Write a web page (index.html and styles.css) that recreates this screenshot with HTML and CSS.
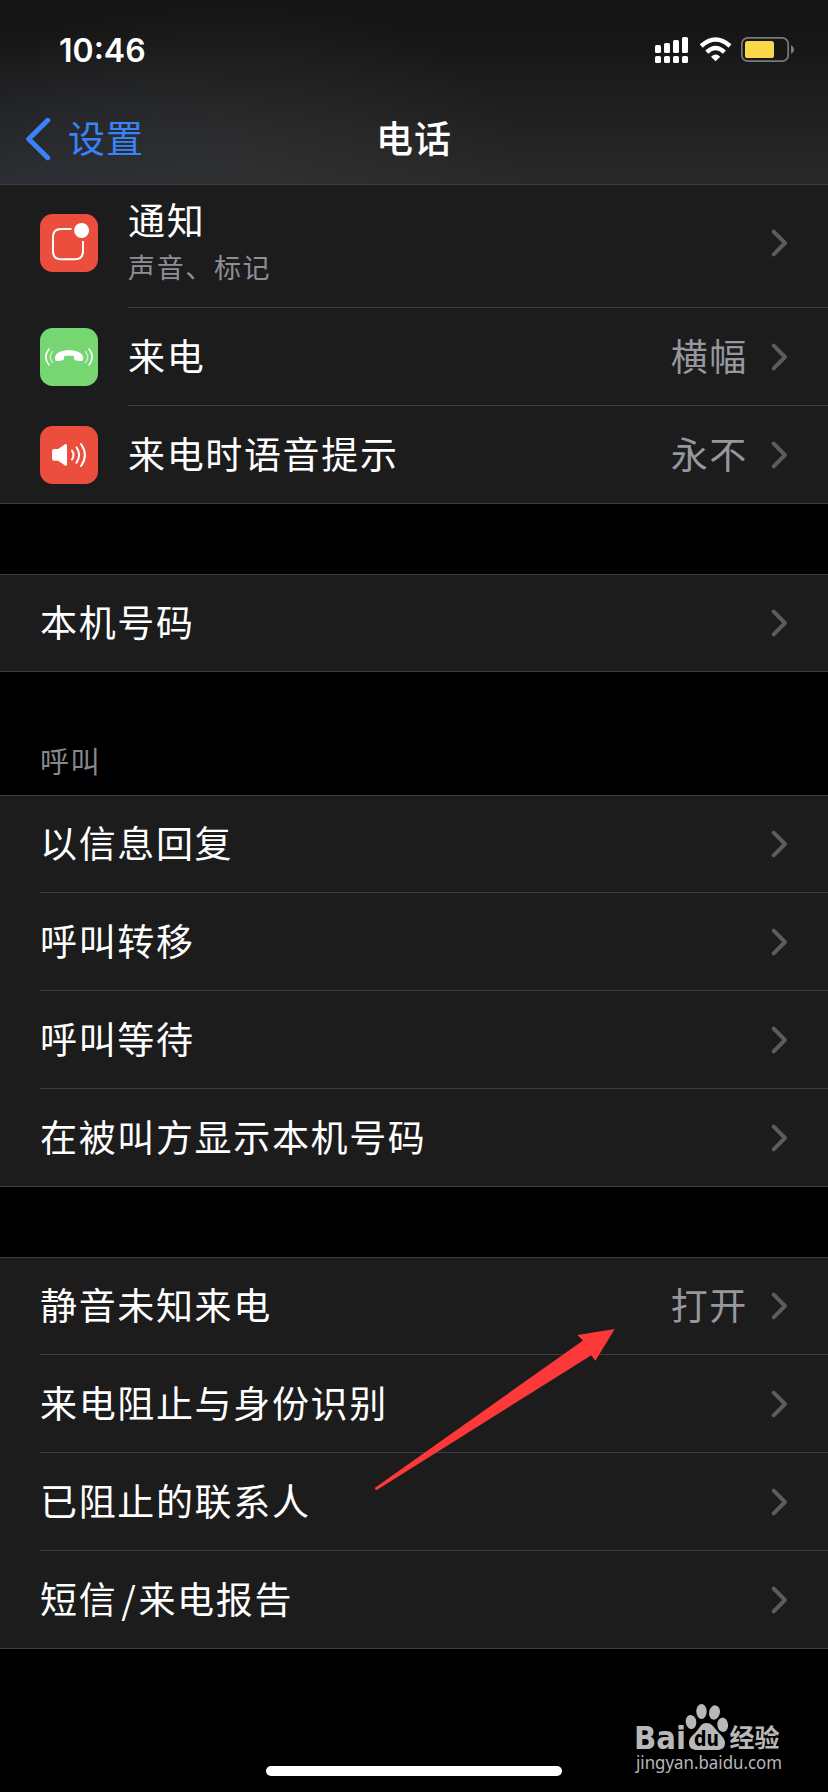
FILE: index.html
```html
<!DOCTYPE html>
<html lang="zh-CN">
<head>
<meta charset="utf-8">
<title>电话</title>
<link rel="stylesheet" href="styles.css">
</head>
<body>
<svg class="defs" width="0" height="0" aria-hidden="true">
  <symbol id="chevron" viewBox="0 0 18 30"><path d="M3.700 3.700 L15 15 L3.700 26.300" fill="none" stroke="#5c5c60" stroke-width="4" stroke-linecap="round" stroke-linejoin="round"/></symbol>
</svg>
<div class="screen">
  <header class="header">
    <div class="status">
      <span class="time">10:46</span>
      <svg class="indicators" width="140" height="28" viewBox="655 36 140 28">
        <g fill="#fff">
          <rect x="655" y="45" width="6" height="8" rx="1.6"/><rect x="664" y="43" width="6" height="10" rx="1.6"/><rect x="673" y="40" width="6" height="13" rx="1.6"/><rect x="682" y="37" width="6" height="16" rx="1.6"/>
          <rect x="655" y="56" width="6" height="7" rx="1.6"/><rect x="664" y="56" width="6" height="7" rx="1.6"/><rect x="673" y="56" width="6" height="7" rx="1.6"/><rect x="682" y="56" width="6" height="7" rx="1.6"/>
          <path d="M715.6 61.3 L711 56.7 Q715.6 52.3 720.2 56.7 Z"/>
        </g>
        <g fill="none" stroke="#fff" stroke-width="4.4">
          <path d="M701.2 46 Q715.6 33 730 46"/><path d="M706.8 52.2 Q715.6 43.8 724.4 52.2"/>
        </g>
        <rect x="741.8" y="37.8" width="46.4" height="23.4" rx="6" fill="none" stroke="#7a7a7a" stroke-width="1.7"/>
        <rect x="745" y="41" width="29" height="17" rx="2.6" fill="#f8d74a"/>
        <path d="M791 45.2 Q794 46.5 794 49.5 Q794 52.500 791 53.800 Z" fill="#7a7a7a"/>
      </svg>
    </div>
    <nav class="nav">
      <a class="back"><svg width="26" height="46" viewBox="0 0 26 46"><path d="M22.700 4.300 L3.700 23 L22.700 41.700" fill="none" stroke="#3a82f7" stroke-width="5" stroke-linecap="round" stroke-linejoin="round"/></svg><span>设置</span></a>
      <h1 class="title">电话</h1>
      <span></span>
    </nav>
  </header>

  <main>
    <section class="group group-icons">
      <div class="row row-tall">
        <svg class="icon" viewBox="0 0 58 58"><rect width="58" height="58" rx="12.500" fill="#eb4e3d"/><path d="M31.500 15 H21 Q13 15 13 23 V37 Q13 45.200 21 45.200 H35 Q43 45.200 43 37 V27" fill="none" stroke="#fff" stroke-width="2"/><circle cx="41.600" cy="16.400" r="7.500" fill="#fff"/></svg>
        <div class="body"><div class="text"><span class="label">通知</span><span class="sub">声音、标记</span></div><svg class="chev"><use href="#chevron"/></svg></div>
      </div>
      <div class="row">
        <svg class="icon" viewBox="0 0 58 58"><rect width="58" height="58" rx="12.500" fill="#76d672"/><path d="M15 29.500 C15.500 24.500 22 22.200 29 22.200 S42.500 24.500 43.200 29.500 C43.500 32.500 42.400 33.300 40.500 33 L36 32.400 C34.200 32.100 33.900 31.300 34 29.500 C34.100 28 33.600 27.800 29 27.800 S23.900 28 24 29.500 C24.100 31.300 23.800 32.100 22 32.400 L17.500 33 C15.600 33.300 14.700 32.500 15 29.500Z" fill="#fff"/><g fill="none" stroke="#fff" stroke-linecap="round"><path d="M9 21 Q2.600 29 9 37 M49 21 Q55.400 29 49 37" stroke-width="1.600"/><path d="M12.500 23.500 Q8 29 12.500 34.500 M45.500 23.500 Q50 29 45.500 34.500" stroke-width="1.500" opacity=".6"/></g></svg>
        <div class="body"><span class="label">来电</span><span class="value">横幅</span><svg class="chev"><use href="#chevron"/></svg></div>
      </div>
      <div class="row">
        <svg class="icon" viewBox="0 0 58 58"><rect width="58" height="58" rx="12.500" fill="#eb4e3d"/><path d="M14 23 H18.200 L25 18.200 Q27 17.300 27 19.500 V38.300 Q27 40.500 25 39.600 L18.200 34.800 H14 Q12 34.800 12 32.800 V25 Q12 23 14 23Z" fill="#fff"/><g fill="none" stroke="#fff" stroke-width="2" stroke-linecap="round"><path d="M32 24.500 Q35 29 32 33.500"/><path d="M36.500 21.300 Q41.700 29 36.500 36.700"/><path d="M41 18 Q48.800 29 41 40"/></g></svg>
        <div class="body"><span class="label">来电时语音提示</span><span class="value">永不</span><svg class="chev"><use href="#chevron"/></svg></div>
      </div>
    </section>

    <section class="group">
      <div class="row"><div class="body"><span class="label">本机号码</span><svg class="chev"><use href="#chevron"/></svg></div></div>
    </section>

    <h2 class="caption">呼叫</h2>
    <section class="group group-captioned">
      <div class="row"><div class="body"><span class="label">以信息回复</span><svg class="chev"><use href="#chevron"/></svg></div></div>
      <div class="row"><div class="body"><span class="label">呼叫转移</span><svg class="chev"><use href="#chevron"/></svg></div></div>
      <div class="row"><div class="body"><span class="label">呼叫等待</span><svg class="chev"><use href="#chevron"/></svg></div></div>
      <div class="row"><div class="body"><span class="label">在被叫方显示本机号码</span><svg class="chev"><use href="#chevron"/></svg></div></div>
    </section>

    <section class="group">
      <div class="row"><div class="body"><span class="label">静音未知来电</span><span class="value">打开</span><svg class="chev"><use href="#chevron"/></svg></div></div>
      <div class="row"><div class="body"><span class="label">来电阻止与身份识别</span><svg class="chev"><use href="#chevron"/></svg></div></div>
      <div class="row"><div class="body"><span class="label">已阻止的联系人</span><svg class="chev"><use href="#chevron"/></svg></div></div>
      <div class="row"><div class="body"><span class="label">短信<span class="slash">/</span>来电报告</span><svg class="chev"><use href="#chevron"/></svg></div></div>
    </section>
  </main>

  <svg class="arrow" width="242" height="164" viewBox="374 1328 242 164"><path d="M614.800 1329 L577.300 1335 L583 1340.500 L375 1487.700 Q374.600 1490 376.800 1489.900 L591.300 1355.200 L595.300 1360.700 Z" fill="#fc3838"/></svg>

  <svg class="watermark" width="170" height="84" viewBox="626 1696 170 84">
    <g fill="#b8b8b8">
      <text class="wm-bai" x="634" y="1749" textLength="52" lengthAdjust="spacingAndGlyphs">Bai</text>
      <ellipse cx="691" cy="1722" rx="5.300" ry="7" transform="rotate(-8 691 1722)"/>
      <ellipse cx="701.500" cy="1711.500" rx="5.200" ry="7.600"/>
      <ellipse cx="714.500" cy="1712.500" rx="5.400" ry="7.200" transform="rotate(12 714.500 1712.500)"/>
      <ellipse cx="722.700" cy="1724.800" rx="5.400" ry="7.200" transform="rotate(-6 722.700 1724.800)"/>
      <path d="M706.500 1723 C712 1723 714.500 1728 718 1732 C722 1736 725 1739 725 1743 C725 1748 721.500 1750 717 1750 H697 C692.500 1750 689 1748 689 1743 C689 1738 692 1736 696 1732 C699.500 1728 701 1723 706.500 1723Z"/>
      <text class="wm-jy" x="729.500" y="1747" textLength="50" lengthAdjust="spacingAndGlyphs">经验</text>
      <text class="wm-url" x="636" y="1769" textLength="146" lengthAdjust="spacingAndGlyphs">jingyan.baidu.com</text>
    </g>
    <text class="wm-du" x="694" y="1745.500" textLength="25" lengthAdjust="spacingAndGlyphs">du</text>
  </svg>
  <div class="home"></div>
</div>
</body>
</html>
```
FILE: styles.css
```css
* { box-sizing: border-box; }
body { margin: 0; background: #000; }
.defs { position: absolute; }
.screen {
  position: relative;
  width: 828px;
  height: 1792px;
  overflow: hidden;
  background: #000;
  color: #fff;
  font-family: "Noto Sans CJK SC", sans-serif;
}
.header {
  height: 185px;
  border-bottom: 1px solid #3d3d3f;
  background:
    radial-gradient(ellipse 250px 150px at 60px 184px, rgba(44, 50, 64, .4), transparent),
    radial-gradient(ellipse 300px 190px at 230px 184px, rgba(56, 56, 56, .5), transparent),
    linear-gradient(#141414, #171717 25%, #292929);
}
.status {
  height: 94px;
  padding: 6px 33px 0 59px;
  display: flex;
  align-items: center;
  justify-content: space-between;
}
.time { padding-top: 1px; font: 600 32px/40px Inter, sans-serif; }
.nav {
  height: 90px;
  padding: 0 25px;
  display: grid;
  grid-template-columns: 1fr auto 1fr;
  align-items: center;
}
.back { display: flex; align-items: center; gap: 17px; color: #3a82f7; font-size: 37px; line-height: 54px; letter-spacing: 1px; }
.back span, .title { padding-bottom: 4px; }
.title { margin: 0; font-size: 37px; line-height: 54px; font-weight: 500; letter-spacing: 1px; }

.group { margin-top: 70px; border-top: 1px solid #3d3d3f; border-bottom: 1px solid #3d3d3f; background: #1c1c1d; }
.group-icons { margin-top: 0; border-top: 0; }
.group-captioned { margin-top: 0; }
.row { height: 98px; padding-left: 40px; display: flex; align-items: center; }
.row:first-child { height: 97px; }
.row:last-child { height: 97px; }
.row:only-child { height: 96px; }
.row.row-tall { height: 123px; }
.icon { width: 58px; height: 58px; margin-right: 30px; flex: none; }
.row-tall .icon { margin-bottom: 7px; }
.body { flex: 1; height: 100%; padding-right: 40px; display: flex; align-items: center; border-bottom: 1px solid #3d3d3f; }
.row:last-child .body { border-bottom: 0; }
.row-tall .body { padding-bottom: 6px; }
.label, .value { padding-bottom: 4px; font-size: 37px; line-height: 54px; letter-spacing: 1.650px; white-space: nowrap; }
.slash { margin: 0 1px 0 4px; }
.text { padding-bottom: 4px; display: flex; flex-direction: column; }
.text .label { padding-bottom: 1px; }
.sub { color: #8e8e94; font-size: 27px; line-height: 40px; letter-spacing: 1.650px; }
.text { margin-top: -3px; }
.value { margin-left: auto; margin-right: 22px; color: #97979e; }
.chev { width: 18px; height: 30px; flex: none; }
.label + .chev, .text + .chev { margin-left: auto; }
.caption { margin: 0; height: 123px; padding: 66px 40px 0; color: #87878d; font-size: 29px; font-weight: 400; line-height: 44px; letter-spacing: 1.500px; }

.arrow { position: absolute; left: 374px; top: 1328px; }
.watermark { position: absolute; left: 626px; top: 1696px; overflow: visible; }
.wm-bai { font: 700 32px "DejaVu Sans", sans-serif; }
.wm-jy { font: 700 25px "Noto Sans CJK SC", sans-serif; }
.wm-url { font: 400 18.500px "Noto Sans", sans-serif; }
.wm-du { font: 700 22px "DejaVu Sans", sans-serif; fill: #000; }
.home { position: absolute; left: 266px; top: 1766px; width: 296px; height: 10px; border-radius: 5px; background: #fff; }
```
